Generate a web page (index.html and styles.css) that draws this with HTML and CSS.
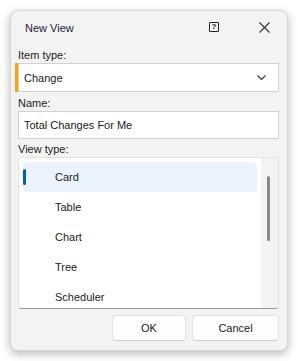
FILE: index.html
```html
<!DOCTYPE html>
<html lang="en">
<head>
    <meta charset="UTF-8">
    <title>New View</title>
    <link rel="stylesheet" href="styles.css">
</head>
<body>
    <div class="dialog">
        <div class="title-bar">
            <span class="title">New View</span>
            <span class="help-btn">?</span>
            <span class="close-btn">
                <svg width="11" height="11" viewBox="0 0 11 11">
                    <path d="M0.5 0.5 L10.5 10.5 M10.5 0.5 L0.5 10.5" stroke="#333" stroke-width="1.1" fill="none"/>
                </svg>
            </span>
        </div>

        <div class="content">
            <label class="field-label">Item type:</label>
            <div class="combo required">
                <span>Change</span>
                <svg class="chevron" width="9" height="5" viewBox="0 0 9 5">
                    <path d="M0.5 0.5 L4.5 4.5 L8.5 0.5" stroke="#333" stroke-width="1.1" fill="none"/>
                </svg>
            </div>

            <label class="field-label">Name:</label>
            <div class="text-input">Total Changes For Me</div>

            <label class="field-label">View type:</label>
            <div class="list-box">
                <div class="list-items">
                    <div class="list-item selected">Card</div>
                    <div class="list-item">Table</div>
                    <div class="list-item">Chart</div>
                    <div class="list-item">Tree</div>
                    <div class="list-item">Scheduler</div>
                </div>
                <div class="scrollbar">
                    <div class="scroll-thumb"></div>
                </div>
            </div>
        </div>

        <div class="footer">
            <button class="btn btn-ok">OK</button>
            <button class="btn btn-cancel">Cancel</button>
        </div>
    </div>
</body>
</html>
```

FILE: styles.css
```css
* {
    margin: 0;
    padding: 0;
    box-sizing: border-box;
    font-family: 'Liberation Sans', Arial, sans-serif;
}

body {
    background-color: #ffffff;
    width: 298px;
    height: 361px;
    overflow: hidden;
}

.dialog {
    margin: 10px 0 0 10px;
    width: 278px;
    height: 341px;
    background-color: #f3f3f3;
    border: 1px solid #d6d6d6;
    border-radius: 8px;
    box-shadow: 0 3px 10px rgba(0, 0, 0, 0.28);
    display: flex;
    flex-direction: column;
}

.title-bar {
    height: 31px;
    display: flex;
    align-items: center;
    padding-left: 14px;
}

.title {
    flex: 1;
    font-size: 11px;
    color: #1c1c3a;
    padding-top: 2px;
}

.help-btn {
    width: 10px;
    height: 10px;
    border: 1.5px solid #222;
    border-radius: 1px;
    font-size: 8px;
    font-weight: bold;
    line-height: 7px;
    text-align: center;
    color: #222;
    margin-right: 40px;
    margin-top: 1px;
}

.close-btn {
    width: 11px;
    height: 11px;
    margin-right: 17px;
    margin-top: 1px;
    display: flex;
}

.content {
    padding: 5px 8px 0 7px;
    display: flex;
    flex-direction: column;
}

.field-label {
    font-size: 11px;
    line-height: 16px;
    color: #1b1b1b;
}

.combo,
.text-input {
    background-color: #ffffff;
    border: 1px solid #d2d2d2;
    font-size: 11px;
    color: #1b1b1b;
    display: flex;
    align-items: center;
    padding-left: 5px;
}

.combo {
    height: 29px;
    position: relative;
    margin-bottom: 3px;
}

.combo span {
    flex: 1;
}

.required::before {
    content: '';
    position: absolute;
    left: -4px;
    top: -1px;
    bottom: -1px;
    width: 3px;
    background-color: #f7a30a;
}

.chevron {
    margin-right: 12px;
}

.text-input {
    height: 28px;
    margin-bottom: 2px;
}

.list-box {
    height: 152px;
    background-color: #ffffff;
    border: 1px solid #e2e2e2;
    border-bottom-color: #9a9a9a;
    border-radius: 4px;
    display: flex;
    overflow: hidden;
}

.list-items {
    flex: 1;
    padding: 4px 4px 0 4px;
}

.list-item {
    height: 30px;
    line-height: 30px;
    font-size: 11px;
    color: #1b1b1b;
    padding-left: 32px;
    border-radius: 4px;
    position: relative;
}

.list-item.selected {
    background-color: #ebf4fd;
}

.list-item.selected::before {
    content: '';
    position: absolute;
    left: 0;
    top: 7px;
    width: 3px;
    height: 16px;
    border-radius: 2px;
    background-color: #005fb8;
}

.scrollbar {
    width: 17px;
    background-color: #f3f3f3;
    padding: 18px 0 0 6px;
}

.scroll-thumb {
    width: 3px;
    height: 65px;
    border-radius: 2px;
    background-color: #8a8a8a;
}

.footer {
    display: flex;
    justify-content: flex-end;
    gap: 6px;
    padding: 6px 8px 0 0;
}

.btn {
    height: 26px;
    background-color: #fdfdfd;
    border: 1px solid #e3e3e3;
    border-bottom-color: #cdcdcd;
    border-radius: 4px;
    font-size: 11px;
    color: #1b1b1b;
}

.btn-ok {
    width: 74px;
}

.btn-cancel {
    width: 87px;
}
```
